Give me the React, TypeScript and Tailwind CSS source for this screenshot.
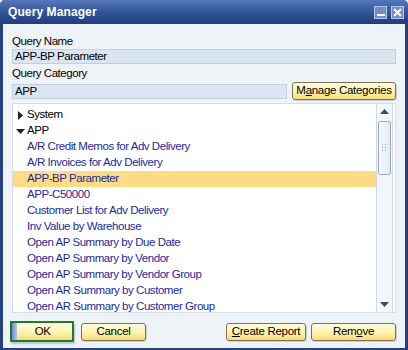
import React from "react";

const items: { label: string; kind: "folder-closed" | "folder-open" | "item"; selected?: boolean }[] = [
  { label: "System", kind: "folder-closed" },
  { label: "APP", kind: "folder-open" },
  { label: "A/R Credit Memos for Adv Delivery", kind: "item" },
  { label: "A/R Invoices for Adv Delivery", kind: "item" },
  { label: "APP-BP Parameter", kind: "item", selected: true },
  { label: "APP-C50000", kind: "item" },
  { label: "Customer List for Adv Delivery", kind: "item" },
  { label: "Inv Value by Warehouse", kind: "item" },
  { label: "Open AP Summary by Due Date", kind: "item" },
  { label: "Open AP Summary by Vendor", kind: "item" },
  { label: "Open AP Summary by Vendor Group", kind: "item" },
  { label: "Open AR Summary by Customer", kind: "item" },
  { label: "Open AR Summary by Customer Group", kind: "item" },
];

function YButton({ children, className = "" }: { children: React.ReactNode; className?: string }) {
  return (
    <div
      className={
        "flex items-center justify-center h-[18px] rounded-[3px] border border-[#7f7252] bg-gradient-to-b from-[#fffce0] via-[#fff4b0] to-[#f3dc7c] text-[11.5px] tracking-[-0.3px] whitespace-nowrap text-black shadow-[1px_1px_0_#c9cfd8] " +
        className
      }
    >
      {children}
    </div>
  );
}

export default function App() {
  return (
    <div
      className="w-[408px] h-[350px] bg-[#23427f] rounded-t-[5px] flex flex-col overflow-hidden"
      style={{ fontFamily: '"Liberation Sans", Arial, sans-serif' }}
    >
      {/* Title bar */}
      <div className="h-[24px] shrink-0 flex items-center justify-between pl-[8px] pr-[4px] bg-gradient-to-b from-[#5679bb] via-[#33559a] to-[#1f3d7c]">
        <span className="text-white font-bold text-[12px] tracking-[0.1px]">Query Manager</span>
        <div className="flex gap-[4px] items-center">
          <div className="w-[13px] h-[13px] border border-[#b8c8e8] bg-[#6f8fca] flex items-end justify-center pb-[2px]">
            <div className="w-[8px] h-[2px] bg-white" />
          </div>
          <div className="w-[13px] h-[13px] border border-[#b8c8e8] bg-[#6f8fca] flex items-center justify-center">
            <svg width="9" height="9" viewBox="0 0 9 9">
              <path d="M1 1 L8 8 M8 1 L1 8" stroke="white" strokeWidth="2" />
            </svg>
          </div>
        </div>
      </div>

      {/* Body */}
      <div className="flex-1 mx-[3px] mb-[2px] bg-[#eef3f8] px-[9px] pt-[9px] flex flex-col text-[11.5px] tracking-[-0.45px] text-black">
        <div className="h-[16px] leading-[16px]">Query Name</div>
        <div className="h-[15px] border border-[#c4cfdc] bg-[#dae5f2] leading-[13px] px-[2px]">APP-BP Parameter</div>
        <div className="h-[18px] leading-[18px]">Query Category</div>
        <div className="flex items-center gap-[5px]">
          <div className="flex-1 h-[15px] border border-[#c4cfdc] bg-[#dae5f2] leading-[13px] px-[2px]">APP</div>
          <YButton className="w-[104px]">
            <span>
              M<span className="underline">a</span>nage Categories
            </span>
          </YButton>
        </div>

        {/* List */}
        <div className="mt-[3px] h-[210px] bg-white border border-[#d6dee9] flex">
          <div className="flex-1 flex flex-col pt-[3px]">
            {items.map((it) => (
              <div
                key={it.label}
                className={
                  "h-[16px] flex items-center " +
                  (it.selected ? "bg-[#ffdc83] " : "")
                }
              >
                {it.kind === "item" ? (
                  <span className="pl-[14px] text-[#1a2a9e] whitespace-nowrap">{it.label}</span>
                ) : (
                  <div className="flex items-center">
                    <div className="w-[14px] flex justify-center pl-[1px]">
                      {it.kind === "folder-closed" ? (
                        <svg width="5" height="9" viewBox="0 0 5 9">
                          <path d="M0 0 L5 4.5 L0 9 Z" fill="#222" />
                        </svg>
                      ) : (
                        <svg width="9" height="5" viewBox="0 0 9 5">
                          <path d="M0 0 L9 0 L4.5 5 Z" fill="#222" />
                        </svg>
                      )}
                    </div>
                    <span className="whitespace-nowrap">{it.label}</span>
                  </div>
                )}
              </div>
            ))}
          </div>
          {/* Scrollbar */}
          <div className="w-[17px] mr-[2px] border-l border-r border-[#cfd8e4] bg-[#f3f6fa] flex flex-col items-center">
            <div className="h-[15px] flex items-center justify-center">
              <svg width="9" height="5" viewBox="0 0 9 5">
                <path d="M0 5 L4.5 0 L9 5 Z" fill="#3c4a5e" />
              </svg>
            </div>
            <div className="w-[13px] h-[54px] mt-[2px] rounded-[2px] border border-[#9aabc6] bg-gradient-to-r from-[#f7f9fc] to-[#e3eaf4] flex items-center justify-center">
              <svg width="5" height="9" viewBox="0 0 5 9">
                <g fill="#8f9db5">
                  <rect x="0" y="0" width="1" height="1" />
                  <rect x="3" y="0" width="1" height="1" />
                  <rect x="0" y="3" width="1" height="1" />
                  <rect x="3" y="3" width="1" height="1" />
                  <rect x="0" y="6" width="1" height="1" />
                  <rect x="3" y="6" width="1" height="1" />
                </g>
              </svg>
            </div>
            <div className="flex-1" />
            <div className="h-[15px] flex items-center justify-center">
              <svg width="9" height="5" viewBox="0 0 9 5">
                <path d="M0 0 L4.5 5 L9 0 Z" fill="#3c4a5e" />
              </svg>
            </div>
          </div>
        </div>

        {/* Bottom buttons */}
        <div className="mt-[8px] flex items-center">
          <div className="w-[64px] h-[21px] ml-[-2px] border-[2px] border-[#1f7a2b] rounded-[1px] flex shadow-[1px_2px_2px_#b9c2cf]">
            <div className="w-[5px] bg-gradient-to-r from-[#6f8fd0] to-[#b8c8e6]" />
            <div className="flex-1 flex items-center justify-center bg-gradient-to-b from-[#fffce0] via-[#fff4b0] to-[#f3dc7c] text-[11.5px] pr-[4px]">
              OK
            </div>
          </div>
          <YButton className="w-[65px] ml-[7px]">Cancel</YButton>
          <div className="flex-1" />
          <YButton className="w-[80px]">
            <span>
              <span className="underline">C</span>reate Report
            </span>
          </YButton>
          <YButton className="w-[85px] ml-[5px]">
            <span>
              Rem<span className="underline">o</span>ve
            </span>
          </YButton>
        </div>
      </div>
    </div>
  );
}
